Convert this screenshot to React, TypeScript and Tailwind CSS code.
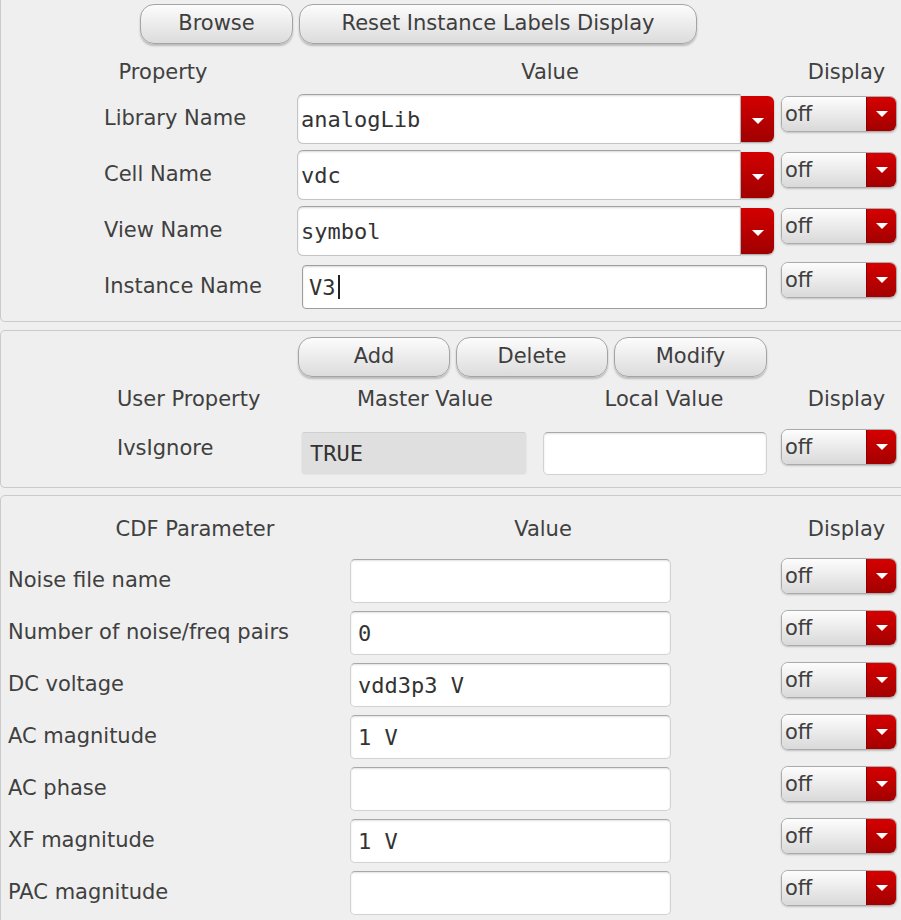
import React from 'react';

const mono = "font-['DejaVu_Sans_Mono','Liberation_Mono',monospace] text-[22px]";

function Arrow() {
  return (
    <svg width="12" height="7" viewBox="0 0 12 7">
      <polygon points="0,0 12,0 6,6" fill="#fff" />
    </svg>
  );
}

function Btn({ label, w }: { label: string; w: string }) {
  return (
    <div
      className={`${w} h-[40px] flex items-center justify-center rounded-[14px] border border-[#a4a4a4] bg-linear-to-b from-[#fcfcfc] to-[#dcdcdc] shadow-[0_2px_2px_rgba(0,0,0,0.22)] text-[#3e3e3e]`}
    >
      {label}
    </div>
  );
}

function Display({ className = '' }: { className?: string }) {
  return (
    <div className={`w-[116px] h-[36px] flex rounded-[7px] border border-[#ababab] overflow-hidden shadow-[0_1px_2px_rgba(0,0,0,0.2)] ${className}`}>
      <div className="flex-1 flex items-center pl-[3px] bg-linear-to-b from-[#fdfdfd] to-[#d9d9d9] leading-none">off</div>
      <div className="w-[30px] flex items-center justify-center bg-linear-to-b from-[#d60000] to-[#a30000] border-l border-[#8e0000]">
        <Arrow />
      </div>
    </div>
  );
}

function Combo({ value }: { value: string }) {
  return (
    <div className="w-[477px] h-[50px] flex">
      <div className={`flex-1 flex items-center pl-[3px] bg-white rounded-l-[6px] border border-[#c4c4c4] border-t-[#a3a3a3] shadow-[inset_0_1px_2px_rgba(0,0,0,0.15)] ${mono} text-[#333]`}>
        {value}
      </div>
      <div className="w-[33px] my-[2px] flex items-center justify-center rounded-r-[6px] bg-linear-to-b from-[#d40000] to-[#a00000] shadow-[0_1px_2px_rgba(0,0,0,0.35)]">
        <div className="mt-[4px]"><Arrow /></div>
      </div>
    </div>
  );
}

function Field({ value = '', w, className = '' }: { value?: string; w: string; className?: string }) {
  return (
    <div className={`${w} h-[44px] flex items-center pl-[7px] bg-white rounded-[5px] border border-[#d2d2d2] border-t-[#a8a8a8] shadow-[inset_0_1px_2px_rgba(0,0,0,0.12)] ${mono} text-[#333] whitespace-pre ${className}`}>
      {value}
    </div>
  );
}

const topRows = [
  { label: 'Library Name', value: 'analogLib' },
  { label: 'Cell Name', value: 'vdc' },
  { label: 'View Name', value: 'symbol' },
];

const cdfRows = [
  { label: 'Noise file name', value: '' },
  { label: 'Number of noise/freq pairs', value: '0' },
  { label: 'DC voltage', value: 'vdd3p3 V' },
  { label: 'AC magnitude', value: '1 V' },
  { label: 'AC phase', value: '' },
  { label: 'XF magnitude', value: '1 V' },
  { label: 'PAC magnitude', value: '' },
];

export default function App() {
  return (
    <div className="w-[901px] h-[920px] overflow-hidden bg-[#efefef] font-['DejaVu_Sans','Liberation_Sans',sans-serif] text-[21px] text-[#404040]">
      <div className="w-[912px]">
        {/* instance properties */}
        <section className="h-[322px] border-x border-b border-[#cacaca] rounded-b-[5px] pt-[4px]">
          <div className="flex gap-[6px] pl-[139px]">
            <Btn label="Browse" w="w-[153px]" />
            <Btn label="Reset Instance Labels Display" w="w-[398px]" />
          </div>
          <div className="flex mt-[16px] leading-[24px] h-[24px]">
            <div className="w-[324px] text-center">Property</div>
            <div className="w-[450px] text-center">Value</div>
            <div className="ml-[16px] w-[111px] text-center">Display</div>
          </div>
          <div className="mt-[10px] flex flex-col gap-[6px]">
            {topRows.map((r) => (
              <div key={r.label} className="flex items-start h-[50px]">
                <div className="pl-[103px] w-[296px] h-[50px] flex items-center">{r.label}</div>
                <Combo value={r.value} />
                <Display className="ml-[7px] mt-[2px]" />
              </div>
            ))}
            <div className="flex items-start h-[50px]">
              <div className="pl-[103px] w-[301px] h-[50px] flex items-center">Instance Name</div>
              <div className={`w-[465px] h-[44px] mt-[3px] flex items-center pl-[6px] bg-white rounded-[4px] border border-[#9d9d9d] shadow-[inset_0_1px_2px_rgba(0,0,0,0.15)] ${mono} text-[#333]`}>
                V3<span className="ml-[2px] w-[2px] h-[24px] bg-[#222]" />
              </div>
              <Display className="ml-[14px]" />
            </div>
          </div>
        </section>

        {/* user properties */}
        <section className="mt-[8px] h-[158px] border border-[#cacaca] rounded-[5px] pt-[6px]">
          <div className="flex gap-[6px] pl-[297px]">
            <Btn label="Add" w="w-[152px]" />
            <Btn label="Delete" w="w-[152px]" />
            <Btn label="Modify" w="w-[153px]" />
          </div>
          <div className="flex mt-[10px] leading-[24px] h-[24px]">
            <div className="pl-[116px] w-[300px]">User Property</div>
            <div className="w-[248px] text-center">Master Value</div>
            <div className="w-[230px] text-center">Local Value</div>
            <div className="ml-[12px] w-[111px] text-center">Display</div>
          </div>
          <div className="flex items-start mt-[18px]">
            <div className="pl-[116px] w-[300px] mt-[7px] leading-[24px]">IvsIgnore</div>
            <div className={`w-[226px] h-[43px] mt-[3px] flex items-center pl-[8px] bg-[#dfdfdf] rounded-[4px] border border-[#e6e6e6] border-t-[#cfcfcf] ${mono} text-[#333]`}>
              TRUE
            </div>
            <Field w="w-[224px] ml-[16px] mt-[3px] !h-[43px]" />
            <Display className="ml-[14px]" />
          </div>
        </section>

        {/* CDF parameters */}
        <section className="mt-[7px] h-[500px] border border-[#cacaca] rounded-[5px] pt-[21px]">
          <div className="flex leading-[24px] h-[24px]">
            <div className="w-[388px] text-center">CDF Parameter</div>
            <div className="w-[308px] text-center">Value</div>
            <div className="ml-[94px] w-[111px] text-center">Display</div>
          </div>
          <div className="mt-[17px] flex flex-col gap-[7px]">
            {cdfRows.map((r) => (
              <div key={r.label} className="flex items-start h-[45px]">
                <div className="pl-[7px] w-[349px] h-[44px] mt-[1px] flex items-center">{r.label}</div>
                <Field value={r.value} w="w-[321px] mt-[1px]" />
                <Display className="ml-[110px]" />
              </div>
            ))}
          </div>
        </section>
      </div>
    </div>
  );
}
